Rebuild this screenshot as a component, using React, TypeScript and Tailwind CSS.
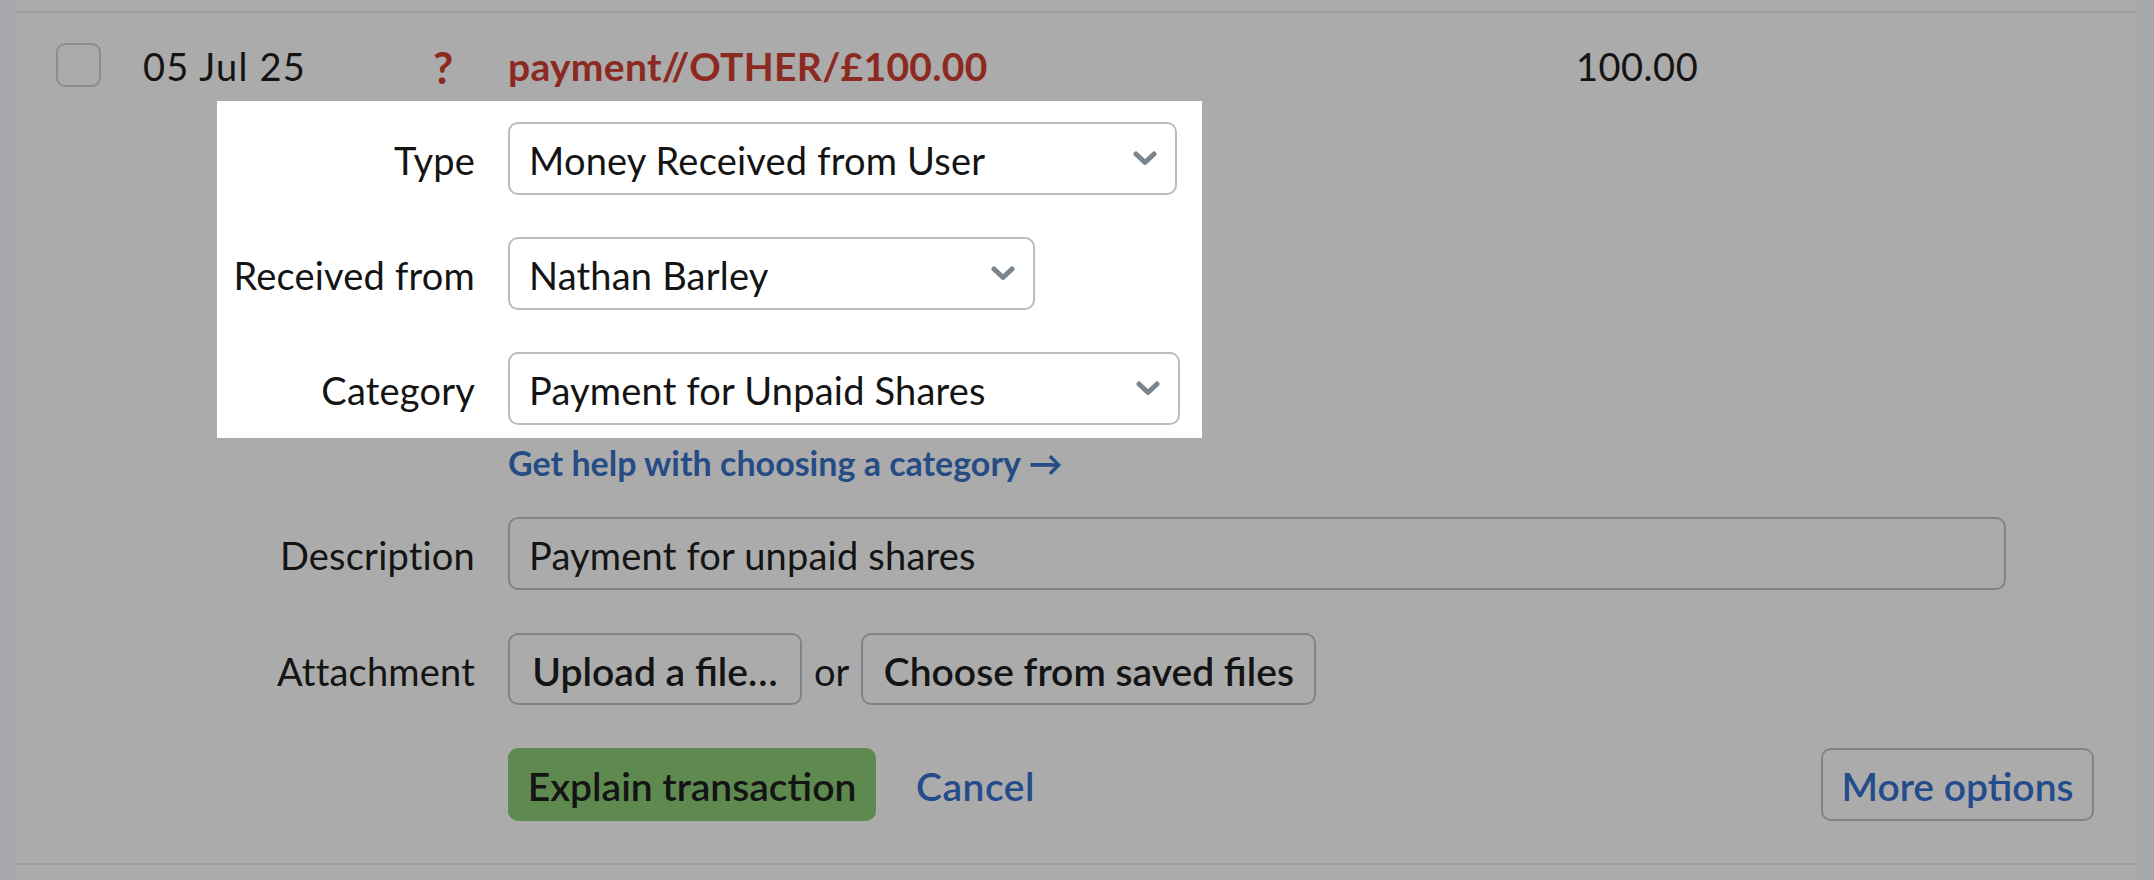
import React from 'react';

const FONT = "font-['Lato','Liberation_Sans',sans-serif]";

function Chevron() {
  return (
    <svg width="24" height="15" viewBox="0 0 24 15" className="shrink-0">
      <polyline
        points="3,3 12,11.5 21,3"
        fill="none"
        stroke="#7b858e"
        strokeWidth="5"
        strokeLinecap="round"
        strokeLinejoin="round"
      />
    </svg>
  );
}

function Select({ value, width }: { value: string; width: string }) {
  return (
    <div
      className={`${width} h-[73px] flex items-center justify-between rounded-[10px] border-2 border-[#b7bdc2] bg-white pl-[19px] pr-[18px]`}
    >
      <span className="pt-[4px] text-[38px] tracking-[0.2px] text-[#141414]">{value}</span>
      <Chevron />
    </div>
  );
}

function Row({ label, children }: { label: string; children: React.ReactNode }) {
  return (
    <div className="flex items-center">
      <div className="w-[258px] shrink-0 pt-[4px] text-right text-[38px] tracking-[0.2px] text-[#141414]">{label}</div>
      <div className="ml-[33px] flex items-center">{children}</div>
    </div>
  );
}

export default function App() {
  return (
    <div className={`flex h-[880px] w-[2154px] overflow-hidden bg-[#ababab] ${FONT}`}>
      <div className="w-[15px] shrink-0 bg-[#a5a7aa]" />

      <div className="flex flex-1 flex-col">
        <div className="h-[11px] shrink-0" />
        <div className="h-[854px] shrink-0 border-y-2 border-[#9c9da1]">
          {/* Transaction row */}
          <div className="mt-[30px] flex h-[44px] items-center">
            <div className="ml-[41px] h-[44px] w-[45px] shrink-0 rounded-[9px] border-2 border-[#8a8d91]" />
            <div className="ml-[42px] w-[290px] shrink-0 pt-[3px] text-[38px] tracking-[1.2px] text-[#141414]">05 Jul 25</div>
            <div className="w-[75px] shrink-0 pt-[3px] text-[44px] font-bold text-[#8c2a22]">?</div>
            <div className="w-[1068px] shrink-0 pt-[3px] text-[39px] font-bold tracking-[0.3px] text-[#8c2a22]">
              payment//OTHER/£100.00
            </div>
            <div className="pt-[3px] text-[38px] tracking-[0.5px] text-[#141414]">100.00</div>
          </div>

          {/* Highlighted part of the form */}
          <div className="ml-[202px] mt-[14px] flex h-[337px] w-[985px] flex-col gap-[42px] bg-white pt-[21px]">
            <Row label="Type">
              <Select value="Money Received from User" width="w-[669px]" />
            </Row>
            <Row label="Received from">
              <Select value="Nathan Barley" width="w-[527px]" />
            </Row>
            <Row label="Category">
              <Select value="Payment for Unpaid Shares" width="w-[672px]" />
            </Row>
          </div>

          <div className="ml-[493px] mt-[5px] h-[40px] text-[34px] font-bold leading-[40px] text-[#264c86]">
            Get help with choosing a category →
          </div>

          <div className="ml-[202px] mt-[34px] flex flex-col gap-[43px]">
            <Row label="Description">
              <div className="flex h-[73px] w-[1498px] items-center rounded-[10px] border-2 border-[#80848a] pl-[19px] pt-[4px] text-[38px] tracking-[0.2px] text-[#141414]">
                Payment for unpaid shares
              </div>
            </Row>
            <Row label="Attachment">
              <div className="flex h-[72px] w-[294px] items-center justify-center rounded-[10px] border-2 border-[#80848a] pt-[4px] text-[39px] font-semibold text-[#141414]">
                Upload a file…
              </div>
              <span className="mx-[12px] pt-[4px] text-[38px] text-[#141414]">or</span>
              <div className="flex h-[72px] w-[455px] items-center justify-center rounded-[10px] border-2 border-[#80848a] pt-[4px] text-[39px] font-semibold text-[#141414]">
                Choose from saved files
              </div>
            </Row>
            <div className="flex items-center">
              <div className="ml-[291px] flex h-[73px] w-[368px] items-center justify-center rounded-[10px] bg-[#5e8a50] pt-[3px] text-[39px] font-semibold text-[#141414]">
                Explain transaction
              </div>
              <div className="ml-[40px] pt-[3px] text-[39px] font-semibold tracking-[0.5px] text-[#244c8a]">Cancel</div>
              <div className="ml-auto mr-[42px] flex h-[73px] w-[273px] items-center justify-center rounded-[10px] border-2 border-[#80848a] pt-[3px] text-[39px] font-semibold text-[#244c8a]">
                More options
              </div>
            </div>
          </div>
        </div>
      </div>

      <div className="w-[18px] shrink-0 bg-[#a5a7aa]" />
    </div>
  );
}
